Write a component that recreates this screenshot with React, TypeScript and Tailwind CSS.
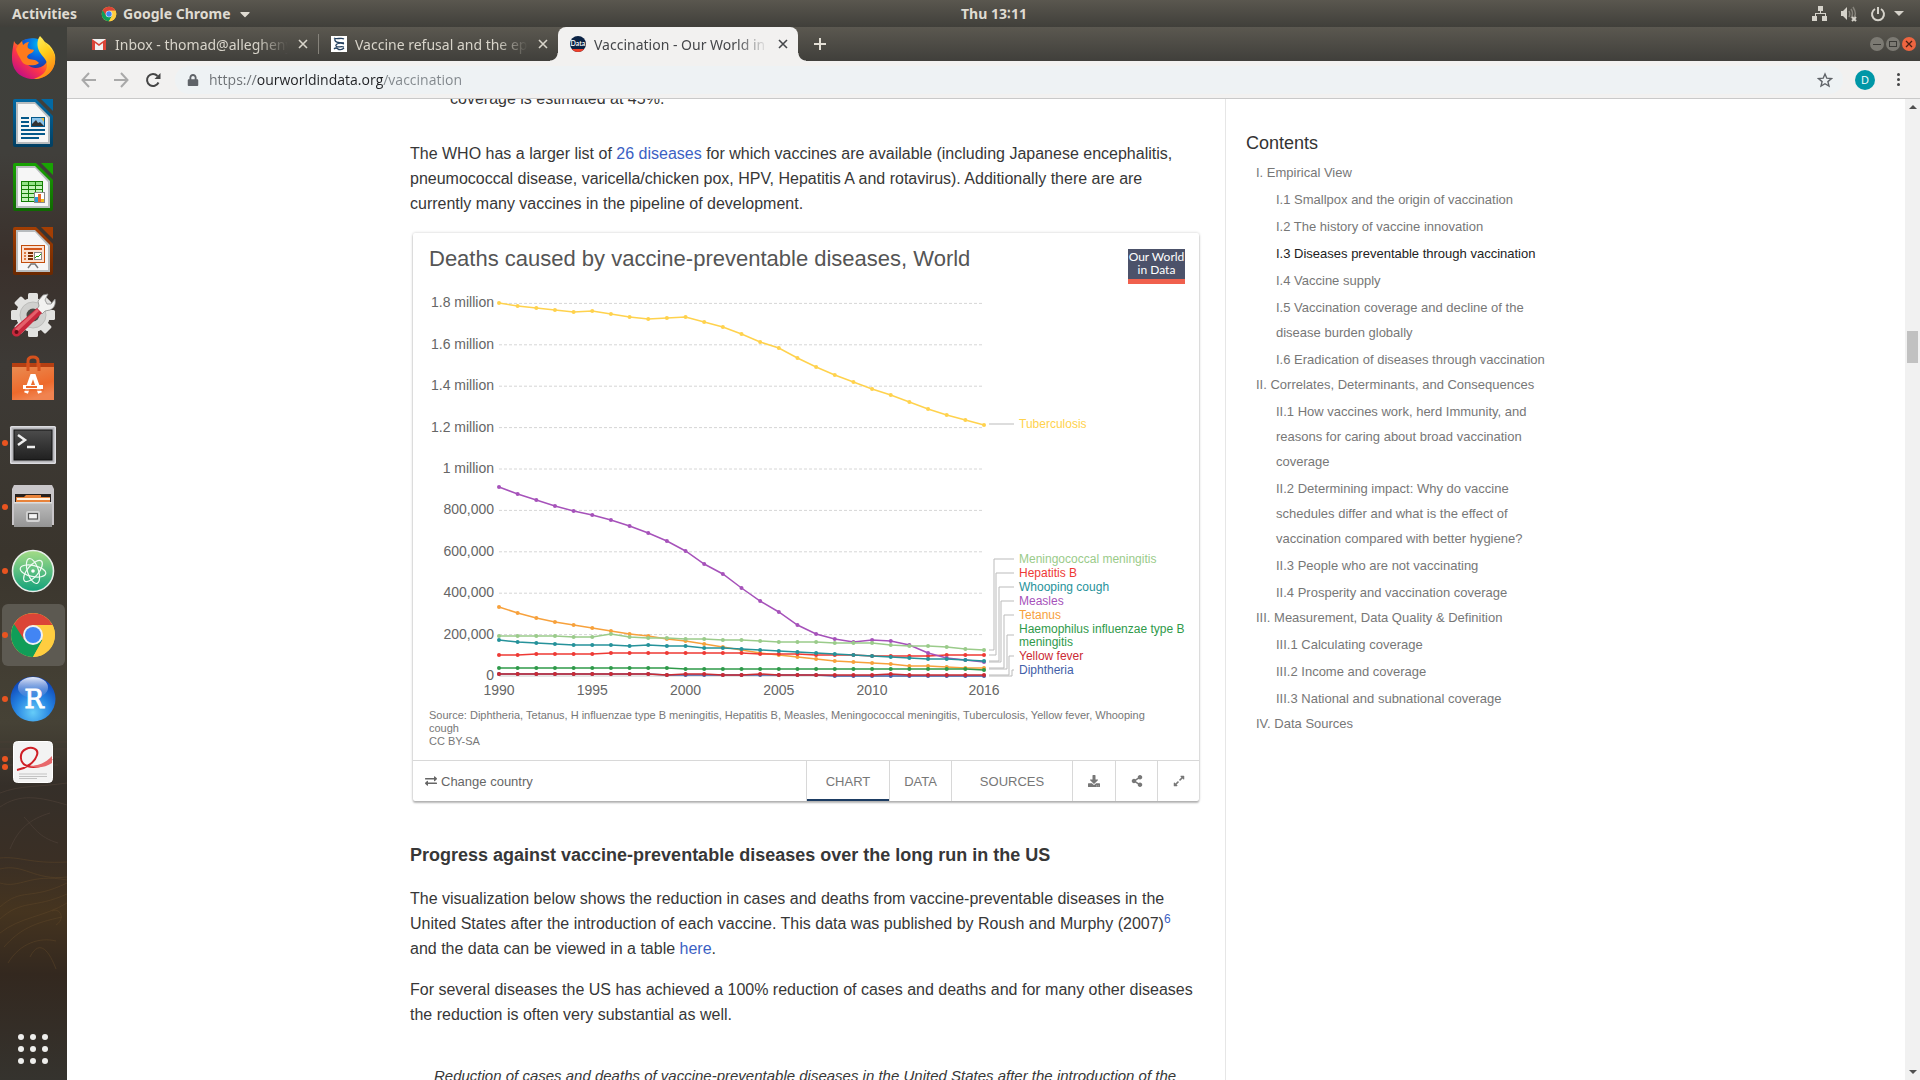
import type { ReactNode } from "react";
import {
  FaCaretDown,
  FaDownload,
  FaExchangeAlt,
  FaExpandAlt,
  FaLock,
  FaShareAlt,
} from "react-icons/fa";

/* ------------------------------------------------------------------ */
/* Chart data: plotted height of each yearly point above the zero line */
/* ------------------------------------------------------------------ */

type Series = {
  name: string[];
  color: string;
  labelY: number;
  elbowX: number;
  joinY: number;
  startY: number;
  heights: number[];
};

const BASE_Y = 386;
const FIRST_X = 86;
const LAST_X = 571;
const YEARS = 27;
const xAt = (i: number) => FIRST_X + (i * (LAST_X - FIRST_X)) / (YEARS - 1);

const SERIES: Series[] = [
  {
    name: ["Diphtheria"], color: "#4260a8", labelY: 384, elbowX: 599, joinY: 380, startY: 386,
    heights: [2, 2, 2, 2, 2, 2, 2, 2, 2, 1, 1, 1, 1, 1, 1, 1, 1, 1, 0, 0, 0, 0, 0, 0, 0, 0, 0],
  },
  {
    name: ["Tetanus"], color: "#f7a13c", labelY: 329, elbowX: 591, joinY: 325, startY: 378,
    heights: [69, 63, 58, 54, 51, 48, 45, 42, 40, 37, 35, 32, 29, 26, 23, 21, 19, 17, 15, 14, 13, 12, 10, 10, 9, 8, 8],
  },
  {
    name: ["Haemophilus influenzae type B", "meningitis"], color: "#2f9a4a", labelY: 343, elbowX: 594, joinY: 345, startY: 379,
    heights: [8, 8, 8, 8, 8, 8, 8, 8, 8, 8, 7, 7, 7, 7, 7, 7, 7, 7, 7, 7, 7, 7, 7, 7, 7, 7, 6],
  },
  {
    name: ["Hepatitis B"], color: "#ee3a35", labelY: 287, elbowX: 583, joinY: 283, startY: 365,
    heights: [21, 21, 22, 22, 22, 22, 23, 23, 23, 23, 23, 23, 23, 23, 22, 22, 22, 21, 21, 21, 20, 20, 20, 20, 21, 21, 21],
  },
  {
    name: ["Measles"], color: "#a652ba", labelY: 315, elbowX: 588, joinY: 311, startY: 372,
    heights: [189, 182, 176, 170, 165, 161, 156, 150, 143, 135, 125, 112, 102, 88, 75, 64, 51, 42, 37, 34, 36, 35, 31, 23, 18, 16, 14],
  },
  {
    name: ["Meningococcal meningitis"], color: "#9acb8a", labelY: 273, elbowX: 581, joinY: 269, startY: 360,
    heights: [40, 40, 40, 40, 39, 39, 42, 39, 38, 38, 37, 37, 36, 36, 35, 34, 34, 34, 33, 33, 33, 31, 30, 30, 29, 27, 26],
  },
  {
    name: ["Tuberculosis"], color: "#ffd24d", labelY: 138, elbowX: 588, joinY: 134, startY: 134,
    heights: [373, 370, 368, 366, 364, 365, 362, 359, 357, 358, 359, 354, 349, 342, 334, 328, 318, 309, 301, 294, 287, 281, 274, 267, 261, 256, 251],
  },
  {
    name: ["Whooping cough"], color: "#26929a", labelY: 301, elbowX: 586, joinY: 297, startY: 371,
    heights: [36, 34, 33, 32, 31, 31, 31, 30, 31, 30, 30, 28, 28, 27, 26, 25, 24, 23, 22, 21, 20, 19, 18, 17, 17, 16, 15],
  },
  {
    name: ["Yellow fever"], color: "#cb2a33", labelY: 370, elbowX: 596, joinY: 366, startY: 385,
    heights: [2, 2, 2, 2, 2, 2, 2, 2, 2, 1, 2, 2, 1, 1, 2, 1, 1, 1, 1, 1, 1, 2, 1, 1, 1, 1, 1],
  },
];

const Y_LABELS = ["0", "200,000", "400,000", "600,000", "800,000", "1 million", "1.2 million", "1.4 million", "1.6 million", "1.8 million"];
const X_LABELS: [string, number][] = [["1990", 0], ["1995", 5], ["2000", 10], ["2005", 15], ["2010", 20], ["2016", 26]];

function DeathsChart() {
  return (
    <svg viewBox="0 0 786 415" className="block w-full font-['Liberation_Sans',Arial,sans-serif]" role="img" aria-label="Deaths caused by vaccine-preventable diseases, World">
      {Y_LABELS.map((label, i) => {
        const y = BASE_Y - i * 41.4;
        return (
          <g key={label}>
            <line x1={FIRST_X} x2={LAST_X - 2} y1={y} y2={y} stroke={i === 0 ? "#ccc" : "#d6d6d6"} strokeDasharray={i === 0 ? undefined : "3 2"} />
            <text x="81" y={y + 4} textAnchor="end" fontSize="14" fill="#666">{label}</text>
          </g>
        );
      })}
      {X_LABELS.map(([label, i]) => (
        <text key={label} x={xAt(i)} y="405" textAnchor="middle" fontSize="14" fill="#666">{label}</text>
      ))}
      {SERIES.map((s) => (
        <g key={s.color}>
          <polyline
            fill="none"
            stroke={s.color}
            strokeWidth="1.5"
            points={s.heights.map((h, i) => `${xAt(i)},${BASE_Y - h}`).join(" ")}
          />
          {s.heights.map((h, i) => (
            <circle key={i} cx={xAt(i)} cy={BASE_Y - h} r="2" fill={s.color} />
          ))}
          <path d={`M576 ${s.startY}H${s.elbowX}V${s.joinY}H601`} fill="none" stroke="#bbb" />
          {s.name.map((line, i) => (
            <text key={line} x="606" y={s.labelY + i * 13} fontSize="12" fill={s.color}>{line}</text>
          ))}
        </g>
      ))}
    </svg>
  );
}

/* ------------------------------------------------------------------ */
/* Dock icons                                                          */
/* ------------------------------------------------------------------ */

function Icon({ children }: { children: ReactNode }) {
  return <svg viewBox="0 0 48 48" className="size-12" aria-hidden="true">{children}</svg>;
}

function FirefoxIcon() {
  return (
    <Icon>
      <defs>
        <linearGradient id="ff-body" x1="0.9" y1="0.1" x2="0.2" y2="0.9">
          <stop offset="0" stopColor="#fff44f" /><stop offset=".35" stopColor="#ff980e" />
          <stop offset=".65" stopColor="#ff3647" /><stop offset="1" stopColor="#c8127f" />
        </linearGradient>
        <radialGradient id="ff-globe" cx=".6" cy=".2" r=".9">
          <stop offset="0" stopColor="#00b4f5" /><stop offset=".5" stopColor="#0a63e0" /><stop offset="1" stopColor="#2b2f8f" />
        </radialGradient>
        <linearGradient id="ff-tail" x1="0" y1="0" x2="0.4" y2="1">
          <stop offset="0" stopColor="#fff36a" /><stop offset=".5" stopColor="#ffcf1c" /><stop offset="1" stopColor="#ff8a16" />
        </linearGradient>
      </defs>
      <g transform="translate(0 -2)">
        <path d="M5 8c1 2 2 3 4 4l4-4c12-6 30 0 33 14 2 14-8 24-21 24C12 46 3 38 3 25 3 18 4 14 5 8z" fill="url(#ff-body)" />
        <path d="M13 8c6-4 18-4 24 3 5 7 4 19-5 23-8 3-15-1-15-8l-2-10z" fill="url(#ff-globe)" />
        <path d="M7 16l3-5 4 1c2-2 4-3 6-3-1 2-2 4-1 6 2 2 5 1 6 2-1 4-6 3-7 7 2 4 7 1 11 5 2 1 0 2-3 3-6 1-12 0-14-5-2-4-4-6-5-11z" fill="#ff7a1d" />
        <path d="M31 3c4 4 5 7 9 11 5 5 6 8 6 13 0 11-9 19-21 19 8-3 13-7 13-14 0-5-3-7-6-11-4-5-5-13-1-18z" fill="url(#ff-tail)" />
      </g>
    </Icon>
  );
}

function DocIcon({ edge, dark, children }: { edge: string; dark: string; children: ReactNode }) {
  return (
    <Icon>
      <defs>
        <linearGradient id={`doc-${edge.slice(1)}`} x1="0" y1="0" x2="0" y2="1">
          <stop offset="0" stopColor={edge} /><stop offset="1" stopColor={dark} />
        </linearGradient>
      </defs>
      <path d="M6 0h21l17 17v29a2 2 0 0 1-2 2H6a2 2 0 0 1-2-2V2a2 2 0 0 1 2-2z" fill={`url(#doc-${edge.slice(1)})`} />
      <path d="M32 0h12v12z" fill={edge} />
      <path d="M7 3h19l15 15v27H7z" fill="#b8bcbe" />
      <path d="M9 5h17l13 14v24H9z" fill="#f6f6f6" />
      {children}
    </Icon>
  );
}

function WriterIcon() {
  return (
    <DocIcon edge="#0369a3" dark="#023f62">
      <path d="M12 19h8M12 23h8M12 27h8M12 31h24M12 35h24M12 39h18" stroke="#04588a" strokeWidth="2" />
      <path d="M22 18h14v10H22z" fill="#04588a" /><path d="M23 19h12v8H23z" fill="#8cc4ea" />
      <path d="M32 19h3v4z" fill="#e8b93c" /><path d="M23 27v-2l4-4 2 3 2-1 4 4z" fill="#333" />
    </DocIcon>
  );
}

function CalcIcon() {
  return (
    <DocIcon edge="#18a303" dark="#106802">
      <path d="M12 18h22v21H12z" fill="#157f06" />
      <path d="M13 19h6v3h-6zM20 19h6v3h-6zM27 19h6v3h-6z" fill="#92e285" />
      <path d="M13 23h6v3h-6zM13 27h6v3h-6zM13 31h6v3h-6zM13 35h6v3h-6zM20 23h6v3h-6zM20 27h6v3h-6zM20 31h6v3h-6zM20 35h6v3h-6zM27 23h6v3h-6zM27 27h6v3h-6z" fill="#c5f2bb" />
      <path d="M25 29h11v11H25z" fill="#888" /><path d="M26 30h9v9h-9z" fill="#fff" />
      <path d="M26 34h3v5h-3z" fill="#2a9ad6" /><path d="M29 31h3v8h-3z" fill="#e8682a" /><path d="M32 36h3v3h-3z" fill="#f0b91a" />
    </DocIcon>
  );
}

function ImpressIcon() {
  return (
    <DocIcon edge="#a33e03" dark="#6b2800">
      <path d="M19 41l3-4h4l3 4" stroke="#777" strokeWidth="1.5" fill="none" />
      <path d="M12 18h24v18H12z" fill="#c24e0c" /><path d="M13 19h22v16H13z" fill="#fbe0cf" />
      <path d="M15 21h18v2H15z" fill="#d3571a" />
      <path d="M15 26h2M15 29h2M15 32h2" stroke="#e07b42" strokeWidth="2" />
      <path d="M19 26h5M19 29h5M19 32h5" stroke="#7a2e02" strokeWidth="2" />
      <path d="M25 25h8v8h-8z" fill="#888" /><path d="M26 26h6v6h-6z" fill="#fff" />
      <path d="M26 31l2-2 1 1 3-3" stroke="#18a303" fill="none" />
    </DocIcon>
  );
}

function SettingsIcon() {
  return (
    <Icon>
      <g fill="#e2e2e0">
        {[0, 45, 90, 135].map((a) => (
          <rect key={a} x="19" y="2" width="10" height="44" rx="1.5" transform={`rotate(${a} 24 24)`} />
        ))}
        <circle cx="24" cy="24" r="17" />
      </g>
      <circle cx="24" cy="24" r="13" fill="#d0d0ce" stroke="#bdbdbb" />
      <circle cx="24" cy="24" r="6.5" fill="#4a4843" />
      <path d="M30 15l-1-5 5-6 5-1-3 6 2 4 4 0 4-5c1 6-1 9-5 11l-5 1-3 3-5-5z" fill="#f2f2f0" stroke="#8c8c8a" strokeWidth=".8" />
      <path d="M28 17l5 5L11 44c-2 2-5 2-7 0s-1-4 0-6z" fill="#c8283c" />
      <path d="M28 18l2 2L9 40l-3-2z" fill="#e4606a" />
      <circle cx="7.5" cy="41" r="2" fill="#5c1018" />
    </Icon>
  );
}

function SoftwareIcon() {
  return (
    <Icon>
      <defs>
        <linearGradient id="bag" x1="0" y1="0" x2=".4" y2="1">
          <stop offset="0" stopColor="#e98b51" /><stop offset=".7" stopColor="#ee6a2c" /><stop offset="1" stopColor="#f08350" />
        </linearGradient>
      </defs>
      <path d="M3 8h42v6H3z" fill="#b53f12" />
      <path d="M19 14V6c0-3 2-4 5-4s5 1 5 4v8" fill="none" stroke="#d4511d" strokeWidth="3" />
      <path d="M3 12h42v33H3z" fill="url(#bag)" />
      <path d="M19 16V8M30 16V8" stroke="#d4511d" strokeWidth="3" />
      <path d="M17 38l6-17h2l6 17" fill="none" stroke="#fff" strokeWidth="4" />
      <path d="M13 35h22" stroke="#ee6a2c" strokeWidth="1.5" />
      <path d="M14 32h20" stroke="#fff" strokeWidth="4" />
      <path d="M17 32h11" stroke="#ee6a2c" strokeWidth="2" />
    </Icon>
  );
}

function TerminalIcon() {
  return (
    <Icon>
      <defs>
        <linearGradient id="term" x1="0" y1="0" x2="0" y2="1"><stop offset="0" stopColor="#4c4c4c" /><stop offset="1" stopColor="#202020" /></linearGradient>
      </defs>
      <g transform="translate(0 2)">
        <rect x="1" y="5" width="46" height="38" rx="1.5" fill="#dcdce0" />
        <rect x="2.5" y="6.5" width="43" height="35" fill="#b4b4b8" />
        <rect x="5" y="9" width="38" height="30" fill="url(#term)" stroke="#111" />
        <path d="M9 14l7 5-7 5" fill="none" stroke="#eee" strokeWidth="2.5" />
        <path d="M18 26h8" stroke="#eee" strokeWidth="2.5" />
      </g>
    </Icon>
  );
}

function FilesIcon() {
  return (
    <Icon>
      <defs>
        <linearGradient id="drawer" x1="0" y1="0" x2="0" y2="1"><stop offset="0" stopColor="#bdbdbd" /><stop offset="1" stopColor="#949494" /></linearGradient>
      </defs>
      <path d="M5 2h38l2 4v36H3V6z" fill="#c9c6c9" />
      <path d="M6 11h36v10H6z" fill="#28211d" />
      <path d="M7 14h8l2-2h15v2h9v6H7z" fill="#e8833a" /><path d="M8 15h33v2H8z" fill="#fff3e2" />
      <path d="M5 19h38v25H5z" fill="url(#drawer)" /><path d="M5 19h38v1.5H5z" fill="#dedede" />
      <rect x="17" y="28" width="14" height="11" rx="2" fill="#d3d3d3" />
      <rect x="19.5" y="30.5" width="9" height="5.5" fill="#f4f4f4" stroke="#555" strokeWidth="1.2" />
    </Icon>
  );
}

function AtomIcon() {
  return (
    <Icon>
      <defs>
        <linearGradient id="atom" x1="0" y1="0" x2="0" y2="1"><stop offset="0" stopColor="#a5dc86" /><stop offset="1" stopColor="#12a17b" /></linearGradient>
      </defs>
      <circle cx="24" cy="24" r="20.5" fill="url(#atom)" stroke="#e8eeea" strokeWidth="1.6" />
      <g fill="none" stroke="#effaf3" strokeWidth="1.2">
        <ellipse cx="24" cy="24" rx="13" ry="5.5" transform="rotate(12 24 24)" />
        <ellipse cx="24" cy="24" rx="13" ry="5.5" transform="rotate(72 24 24)" />
        <ellipse cx="24" cy="24" rx="13" ry="5.5" transform="rotate(130 24 24)" />
      </g>
      <circle cx="24" cy="24" r="1.8" fill="#fff" />
    </Icon>
  );
}

function ChromeLogo({ className }: { className: string }) {
  return (
    <svg viewBox="0 0 48 48" className={className} aria-hidden="true">
      <circle cx="24" cy="24" r="22" fill="#ffcd40" />
      <path d="M24 24L5 13A22 22 0 0 0 24 46l9.5-17z" fill="#109d58" />
      <path d="M5 13A22 22 0 0 1 43.5 14H24l-9 5.5v9z" fill="#db4437" />
      <path d="M24 46A22 22 0 0 0 43.5 14H24l9.5 15z" fill="#ffcd40" />
      <circle cx="24" cy="24" r="10" fill="#f1f1f1" />
      <circle cx="24" cy="24" r="8" fill="#4285f4" />
    </svg>
  );
}

function RStudioIcon() {
  return (
    <Icon>
      <defs>
        <radialGradient id="rs" cx=".5" cy=".8" r=".8"><stop offset="0" stopColor="#66ccf8" /><stop offset=".5" stopColor="#2583e2" /><stop offset="1" stopColor="#0b3cb0" /></radialGradient>
        <linearGradient id="rs-shine" x1="0" y1="0" x2="0" y2="1"><stop offset="0" stopColor="#e6ecfa" /><stop offset="1" stopColor="#6a90dc" stopOpacity=".2" /></linearGradient>
      </defs>
      <circle cx="24" cy="24" r="22.5" fill="url(#rs)" />
      <ellipse cx="24" cy="12.5" rx="15" ry="10.5" fill="url(#rs-shine)" />
      <text x="25" y="33" textAnchor="middle" fontSize="26" fill="#fff" stroke="#fff" strokeWidth=".8" className="font-[family-name:DejaVu_Serif,serif]">R</text>
    </Icon>
  );
}

function DocumentViewerIcon() {
  return (
    <Icon>
      <rect x="4.5" y="2.5" width="39" height="41" rx="4" fill="#f3f3f3" stroke="#fff" />
      <path d="M10 35h28M10 37.5h28M10 39.5h18" stroke="#c3c3c3" strokeWidth="1" />
      <path d="M43 20c-8 8-18 9-25 7-8-3-8-14-1-17 6-3 13 0 11 6-2 7-10 13-20 15" fill="none" stroke="#cf1f26" strokeWidth="2" />
      <path d="M43 17c-6 7-14 10-23 10 9 3 17 1 23-3z" fill="#e8696c" />
    </Icon>
  );
}

const DOCK: { label: string; dots: number; active?: boolean; icon: ReactNode }[] = [
  { label: "Firefox", dots: 0, icon: <FirefoxIcon /> },
  { label: "Writer", dots: 0, icon: <WriterIcon /> },
  { label: "Calc", dots: 0, icon: <CalcIcon /> },
  { label: "Impress", dots: 0, icon: <ImpressIcon /> },
  { label: "Settings", dots: 0, icon: <SettingsIcon /> },
  { label: "Software", dots: 0, icon: <SoftwareIcon /> },
  { label: "Terminal", dots: 1, icon: <TerminalIcon /> },
  { label: "Files", dots: 1, icon: <FilesIcon /> },
  { label: "Atom", dots: 1, icon: <AtomIcon /> },
  { label: "Chrome", dots: 1, active: true, icon: <ChromeLogo className="size-12" /> },
  { label: "RStudio", dots: 1, icon: <RStudioIcon /> },
  { label: "Document Viewer", dots: 2, icon: <DocumentViewerIcon /> },
];

function DockBackdrop() {
  return (
    <svg className="absolute inset-0 size-full" viewBox="0 0 67 1053" preserveAspectRatio="none" aria-hidden="true">
      <defs>
        <linearGradient id="dock" x1="0" y1="0" x2="0" y2="1">
          <stop offset="0" stopColor="#3f403b" /><stop offset=".12" stopColor="#403f3b" /><stop offset=".22" stopColor="#3a302b" />
          <stop offset=".32" stopColor="#3d3a36" /><stop offset=".5" stopColor="#3a352d" /><stop offset=".66" stopColor="#464236" />
          <stop offset=".72" stopColor="#352f29" /><stop offset=".79" stopColor="#3a2f25" /><stop offset=".84" stopColor="#45341f" />
          <stop offset=".9" stopColor="#33281f" /><stop offset="1" stopColor="#35332e" />
        </linearGradient>
      </defs>
      <path d="M0 0h67v1053H0z" fill="url(#dock)" />
      <g fill="none" stroke="#5d4527" strokeOpacity=".5">
        <path d="M0 831c20-2 30 6 67 4M0 842c24-6 34 12 67 8M0 856c20 6 30-10 67-3" />
        <path d="M0 880c22-20 30-6 67-24M0 892c22-20 34-10 67-25M0 906c20-16 44-16 67-30M4 920c16-18 30-24 58-30" />
        <path d="M8 936c12-20 32-26 48-22M52 884c8-4 14 8 4 14M30 930c10-20 20-4 26 12" />
      </g>
      <g fill="none" stroke="#4b3f36" strokeOpacity=".7">
        <path d="M0 780c20-14 40-10 67-2M10 822c8-20 20-30 40-36M24 790c10 10 14 20 34 26M0 766c20-8 40-6 67-10" />
        <path d="M0 715h67M0 722h67M0 730h60M0 738h58" />
      </g>
    </svg>
  );
}

function Dock() {
  return (
    <nav aria-label="Dock" className="relative flex w-[67px] shrink-0 flex-col overflow-hidden">
      <DockBackdrop />
      {DOCK.map((item) => (
        <button key={item.label} type="button" aria-label={item.label} className="relative flex h-16 shrink-0 items-center justify-center pr-px">
          {item.active && <span className="absolute inset-x-0.5 inset-y-px rounded-md bg-[#6a6760]/70" />}
          <span className="absolute left-0.5 flex flex-col gap-0.5">
            {Array.from({ length: item.dots }, (_, i) => (
              <span key={i} className="size-1.5 rounded-full bg-[#e95420]" />
            ))}
          </span>
          <span className="relative">{item.icon}</span>
        </button>
      ))}
      <button type="button" aria-label="Show Applications" className="relative mt-auto mb-4 grid grid-cols-3 gap-1.5 self-center pr-px">
        {Array.from({ length: 9 }, (_, i) => (
          <span key={i} className="size-1.5 rounded-full bg-[#eeeeec]" />
        ))}
      </button>
    </nav>
  );
}

/* ------------------------------------------------------------------ */
/* Desktop top bar                                                     */
/* ------------------------------------------------------------------ */

function TopBar() {
  return (
    <header className="grid h-[27px] shrink-0 grid-cols-3 items-center bg-linear-to-b from-[#5a574f] to-[#403f3a] pl-3 pr-4 font-['Noto_Sans',sans-serif] text-[14px] font-bold text-[#dfdbd2]">
      <div className="flex items-center gap-6">
        <button type="button">Activities</button>
        <button type="button" className="flex items-center gap-1.5">
          <ChromeLogo className="size-4" />
          Google Chrome
          <FaCaretDown className="size-4" />
        </button>
      </div>
      <button type="button" className="justify-self-center pl-18">Thu 13∶11</button>
      <div className="flex items-center justify-end gap-3 text-[#d5d2ca]">
        <svg viewBox="0 0 16 16" className="size-4" fill="currentColor" aria-hidden="true">
          <path d="M6 0h5v5H9v2h5v3h1v5h-5v-5h3V8H4v2h1v5H0v-5h3V7h5V5H6z" />
        </svg>
        <svg viewBox="0 0 18 16" className="h-4 w-[18px]" aria-hidden="true">
          <path d="M1 5h2l4-4v13l-4-4H1z" fill="currentColor" />
          <path d="M9 5c1 2 1 4 0 6M11 3c2 3 2 6 0 9M13 1c3 5 3 8 1 10" fill="none" stroke="#85827a" strokeWidth="1.5" />
          <path d="M12 11l4 4M16 11l-4 4" stroke="currentColor" strokeWidth="2" />
        </svg>
        <svg viewBox="0 0 16 16" className="size-4" fill="none" stroke="currentColor" strokeWidth="2" aria-hidden="true">
          <path d="M5 3a6 6 0 1 0 6 0M8 1v7" />
        </svg>
        <svg viewBox="0 0 10 6" className="-ml-1 h-1.5 w-2.5" fill="currentColor" aria-hidden="true"><path d="M0 0h10L5 5z" /></svg>
      </div>
    </header>
  );
}

/* ------------------------------------------------------------------ */
/* Browser chrome                                                      */
/* ------------------------------------------------------------------ */

function Cross() {
  return (
    <svg viewBox="0 0 10 10" className="size-2.5" aria-hidden="true">
      <path d="M1 1l8 8M9 1L1 9" stroke="currentColor" strokeWidth="1.6" />
    </svg>
  );
}

function Tab({ icon, title, active }: { icon: ReactNode; title: string; active?: boolean }) {
  return (
    <div
      className={
        active
          ? "relative flex h-full w-60 items-center rounded-t-lg bg-[#f2f1f0] pr-2.5 pl-3 text-[#45474a]"
          : "relative flex h-full w-[239px] items-center pr-2.5 pl-3 text-[#d8d4ca]"
      }
    >
      {active && (
        <>
          <span className="absolute -left-2 bottom-0 size-2 bg-[radial-gradient(circle_at_0_0,transparent_7px,#f2f1f0_8px)]" />
          <span className="absolute -right-2 bottom-0 size-2 bg-[radial-gradient(circle_at_100%_0,transparent_7px,#f2f1f0_8px)]" />
        </>
      )}
      {icon}
      <button type="button" className="ml-2 min-w-0 flex-1 overflow-hidden text-left whitespace-nowrap mask-[linear-gradient(90deg,#000_82%,transparent_100%)]">{title}</button>
      <button type="button" aria-label="Close tab" className="ml-2.5"><Cross /></button>
    </div>
  );
}

function TabStrip() {
  return (
    <div className="flex h-[34px] shrink-0 items-center bg-linear-to-b from-[#5b5850] to-[#403f3b] pl-3 pr-1 font-['Noto_Sans',sans-serif] text-[14px]">
      <Tab
        title="Inbox - thomad@allegheny.edu"
        icon={
          <svg viewBox="0 0 16 16" className="size-4 shrink-0" aria-hidden="true">
            <path d="M1 3h14v11H1z" fill="#f1f1f1" /><path d="M1 3v11h3V7l4 3 4-3v7h3V3l-7 5z" fill="#db4437" />
          </svg>
        }
      />
      <span className="h-5 w-px bg-[#86837b]" />
      <Tab
        title="Vaccine refusal and the epidemic"
        icon={
          <svg viewBox="0 0 16 16" className="size-4 shrink-0" aria-hidden="true">
            <path d="M0 0h16v16H0z" fill="#fff" />
            <path d="M3 2c3 2 7-1 10 1M4 3c-1 3 3 4 9 4M13 8c-4-2-9 0-8 2s5 0 8 1M3 13c2-2 3-1 4 0s4 1 6-1" fill="none" stroke="#23405f" strokeWidth="1.3" />
          </svg>
        }
      />
      <Tab
        active
        title="Vaccination - Our World in Data"
        icon={
          <svg viewBox="0 0 16 16" className="size-4 shrink-0" aria-hidden="true">
            <clipPath id="owid"><circle cx="8" cy="8" r="8" /></clipPath>
            <g clipPath="url(#owid)"><path d="M0 0h16v16H0z" fill="#0b2345" /><path d="M0 13h16v3H0z" fill="#f0402a" /></g>
            <text x="8" y="10" textAnchor="middle" fontSize="7" fontWeight="600" fill="#fff" className="font-['Lato',sans-serif]">Data</text>
          </svg>
        }
      />
      <button type="button" aria-label="New tab" className="ml-4 text-[#e3dfd6]">
        <svg viewBox="0 0 12 12" className="size-3" aria-hidden="true"><path d="M6 0v12M0 6h12" stroke="currentColor" strokeWidth="2" /></svg>
      </button>
      <div className="ml-auto flex gap-0.5">
        <button type="button" aria-label="Minimize" className="flex size-3.5 items-center justify-center rounded-full bg-[#7c7a73]">
          <span className="h-px w-2 bg-[#3c3b37]" />
        </button>
        <button type="button" aria-label="Maximize" className="flex size-3.5 items-center justify-center rounded-full bg-[#7c7a73]">
          <span className="h-1.5 w-2 border border-[#3c3b37]" />
        </button>
        <button type="button" aria-label="Close" className="flex size-3.5 items-center justify-center rounded-full bg-[#ee6540] text-[#4a2013]">
          <svg viewBox="0 0 8 8" className="size-2" aria-hidden="true"><path d="M1 1l6 6M7 1L1 7" stroke="currentColor" strokeWidth="1.3" /></svg>
        </button>
      </div>
    </div>
  );
}

function Toolbar() {
  return (
    <div className="flex h-[38px] shrink-0 items-center border-b border-[#c9c9c9] bg-[#f2f1f0] pr-[18px] pl-3.5 font-['Open_Sans',sans-serif]">
      <div className="flex items-center gap-4 text-[#a9a9a9]">
        <button type="button" aria-label="Back">
          <svg viewBox="0 0 16 16" className="size-4" fill="none" stroke="currentColor" strokeWidth="2" aria-hidden="true"><path d="M15 8H2M8 1L1.5 8 8 15" /></svg>
        </button>
        <button type="button" aria-label="Forward">
          <svg viewBox="0 0 16 16" className="size-4" fill="none" stroke="currentColor" strokeWidth="2" aria-hidden="true"><path d="M1 8h13M8 1l6.5 7L8 15" /></svg>
        </button>
        <button type="button" aria-label="Reload" className="text-[#454545]">
          <svg viewBox="0 0 16 16" className="size-4" fill="none" stroke="currentColor" strokeWidth="2" aria-hidden="true">
            <path d="M13.5 10.5A6 6 0 1 1 12.5 4" /><path d="M15.5 1v6h-6z" fill="currentColor" stroke="none" />
          </svg>
        </button>
      </div>
      <div className="ml-3.5 flex h-7 flex-1 items-center rounded-full bg-[#eef2f4] pl-3 pr-2.5">
        <FaLock className="size-3 text-[#5f6368]" />
        <input
          aria-label="Address"
          readOnly
          value="https://ourworldindata.org/vaccination"
          className="ml-2.5 flex-1 bg-[linear-gradient(90deg,#6b6f73_47px,#202124_47px,#202124_174px,#80868b_174px)] bg-clip-text text-[14px] text-transparent outline-none"
        />
        <button type="button" aria-label="Bookmark this page">
          <svg viewBox="0 0 16 16" className="size-4" fill="none" stroke="#5f6368" strokeWidth="1.4" aria-hidden="true">
            <path d="M8 2l1.8 4.2 4.6.4-3.5 3 1.1 4.5L8 11.7l-4 2.4 1.1-4.5-3.5-3 4.600-.4z" />
          </svg>
        </button>
      </div>
      <button type="button" aria-label="Profile" className="ml-3 size-5 rounded-full bg-[#0097a7] text-[11px] leading-5 text-white">D</button>
      <button type="button" aria-label="Menu" className="ml-5 flex flex-col gap-0.5 px-0.5">
        <span className="size-[3px] rounded-full bg-[#454545]" />
        <span className="size-[3px] rounded-full bg-[#454545]" />
        <span className="size-[3px] rounded-full bg-[#454545]" />
      </button>
    </div>
  );
}

/* ------------------------------------------------------------------ */
/* Page                                                                */
/* ------------------------------------------------------------------ */

function ChartCard() {
  const tab = "border-l border-[#d8d8d8] text-[#777]";
  const iconTab = "flex items-center justify-center border-l border-[#d8d8d8] text-[#777]";
  return (
    <figure className="mt-[17px] mr-px ml-[3px] rounded-xs bg-white shadow-[0_0_3px_rgba(0,0,0,0.22),0_2px_2px_rgba(0,0,0,0.25)]">
      <div className="flex items-start justify-between pt-3 pr-3.5 pl-4">
        <h2 className="text-[22px] leading-7 text-[#555]">Deaths caused by vaccine-preventable diseases, World</h2>
        <a href="#owid" className="mt-1 flex h-[35px] w-[57px] flex-col items-center border-b-5 border-[#f0604d] bg-[#4c526a] pt-px font-['Lato',sans-serif] text-[12px] leading-[13px] whitespace-nowrap text-white">
          <span>Our World</span>
          <span>in Data</span>
        </a>
      </div>
      <div className="mt-1.5">
        <DeathsChart />
      </div>
      <figcaption className="pt-1 pr-10 pl-4 text-[11px] leading-[13px] text-[#777]">
        Source: Diphtheria, Tetanus, H influenzae type B meningitis, Hepatitis B, Measles, Meningococcal meningitis, Tuberculosis, Yellow fever, Whooping cough
        <br />
        CC BY-SA
      </figcaption>
      <div className="mt-3 flex h-[41px] border-t border-[#d8d8d8] text-[13px]">
        <button type="button" className="flex items-center gap-1 pl-3 text-[#666]">
          <FaExchangeAlt className="size-3" />
          Change country
        </button>
        <div className="ml-auto grid grid-cols-[83px_62px_121px_43px_42px_42px]">
          <button type="button" className="border-l border-[#d8d8d8] text-[#777] shadow-[inset_0_-2px_#1d3d63]">CHART</button>
          <button type="button" className={tab}>DATA</button>
          <button type="button" className={tab}>SOURCES</button>
          <button type="button" aria-label="Download" className={iconTab}><FaDownload className="size-3" /></button>
          <button type="button" aria-label="Share" className={iconTab}><FaShareAlt className="size-3" /></button>
          <button type="button" aria-label="Full screen" className={iconTab}><FaExpandAlt className="size-3" /></button>
        </div>
      </div>
    </figure>
  );
}

function Article() {
  return (
    <article className="w-[790px] shrink-0 text-[16px] leading-[25px] text-[#373737]">
      <ul className="-mt-[13px] pl-10"><li>coverage is estimated at 45%.</li></ul>
      <p className="mt-[30px]">
        The WHO has a larger list of <a href="#diseases" className="text-[#3b61c4]">26 diseases</a> for which vaccines are available (including Japanese encephalitis, pneumococcal disease, varicella/chicken pox, HPV, Hepatitis A and rotavirus). Additionally there are are currently many vaccines in the pipeline of development.
      </p>
      <ChartCard />
      <h3 className="mt-[42px] text-[18px] font-bold">Progress against vaccine-preventable diseases over the long run in the US</h3>
      <p className="mt-[18px]">
        The visualization below shows the reduction in cases and deaths from vaccine-preventable diseases in the United States after the introduction of each vaccine. This data was published by Roush and Murphy (2007)
        <sup className="text-[12px]"><a href="#note-6" className="text-[#3b61c4]">6</a></sup> and the data can be viewed in a table <a href="#table" className="text-[#3b61c4]">here</a>.
      </p>
      <p className="mt-4">
        For several diseases the US has achieved a 100% reduction of cases and deaths and for many other diseases the reduction is often very substantial as well.
      </p>
      <p className="mt-9 pl-6 text-[15px] italic">
        Reduction of cases and deaths of vaccine-preventable diseases in the United States after the introduction of the vaccine
      </p>
    </article>
  );
}

const TOC: { text: string; sub?: boolean; current?: boolean }[] = [
  { text: "I. Empirical View" },
  { text: "I.1 Smallpox and the origin of vaccination", sub: true },
  { text: "I.2 The history of vaccine innovation", sub: true },
  { text: "I.3 Diseases preventable through vaccination", sub: true, current: true },
  { text: "I.4 Vaccine supply", sub: true },
  { text: "I.5 Vaccination coverage and decline of the disease burden globally", sub: true },
  { text: "I.6 Eradication of diseases through vaccination", sub: true },
  { text: "II. Correlates, Determinants, and Consequences" },
  { text: "II.1 How vaccines work, herd Immunity, and reasons for caring about broad vaccination coverage", sub: true },
  { text: "II.2 Determining impact: Why do vaccine schedules differ and what is the effect of vaccination compared with better hygiene?", sub: true },
  { text: "II.3 People who are not vaccinating", sub: true },
  { text: "II.4 Prosperity and vaccination coverage", sub: true },
  { text: "III. Measurement, Data Quality & Definition" },
  { text: "III.1 Calculating coverage", sub: true },
  { text: "III.2 Income and coverage", sub: true },
  { text: "III.3 National and subnational coverage", sub: true },
  { text: "IV. Data Sources" },
];

function Contents() {
  return (
    <aside className="ml-[25px] flex-1 border-l border-[#e6e6e6] pt-8 pr-3 pl-5">
      <h3 className="text-[18px] leading-6 text-[#333]">Contents</h3>
      <ul className="mt-[5px] pl-2.5 text-[13px] leading-[25px] text-[#777]">
        {TOC.map((item) => (
          <li key={item.text} className={item.sub ? "mt-0.5 pl-5" : ""}>
            <a href="#section" className={item.current ? "text-[#222]" : ""}>{item.text}</a>
          </li>
        ))}
      </ul>
    </aside>
  );
}

function ScrollBar() {
  return (
    <div className="flex w-[15px] shrink-0 flex-col items-center justify-between bg-[#f1f1f1] py-1.5 text-[#505050]">
      <svg viewBox="0 0 8 4" className="h-1 w-2" fill="currentColor" aria-hidden="true"><path d="M4 0l4 4H0z" /></svg>
      <span className="mt-[222px] mb-auto h-8 w-[11px] bg-[#c1c1c1]" />
      <svg viewBox="0 0 8 4" className="h-1 w-2" fill="currentColor" aria-hidden="true"><path d="M0 0h8L4 4z" /></svg>
    </div>
  );
}

export default function App() {
  return (
    <div className="flex h-screen flex-col overflow-hidden bg-white">
      <TopBar />
      <div className="flex min-h-0 flex-1">
        <Dock />
        <div className="flex min-w-0 flex-1 flex-col">
          <TabStrip />
          <Toolbar />
          <div className="flex min-h-0 flex-1 font-['Liberation_Sans',Arial,sans-serif]">
            <main className="flex min-w-0 flex-1 justify-center overflow-hidden">
              <div className="flex w-full max-w-[1152px]">
                <Article />
                <Contents />
              </div>
            </main>
            <ScrollBar />
          </div>
        </div>
      </div>
    </div>
  );
}
